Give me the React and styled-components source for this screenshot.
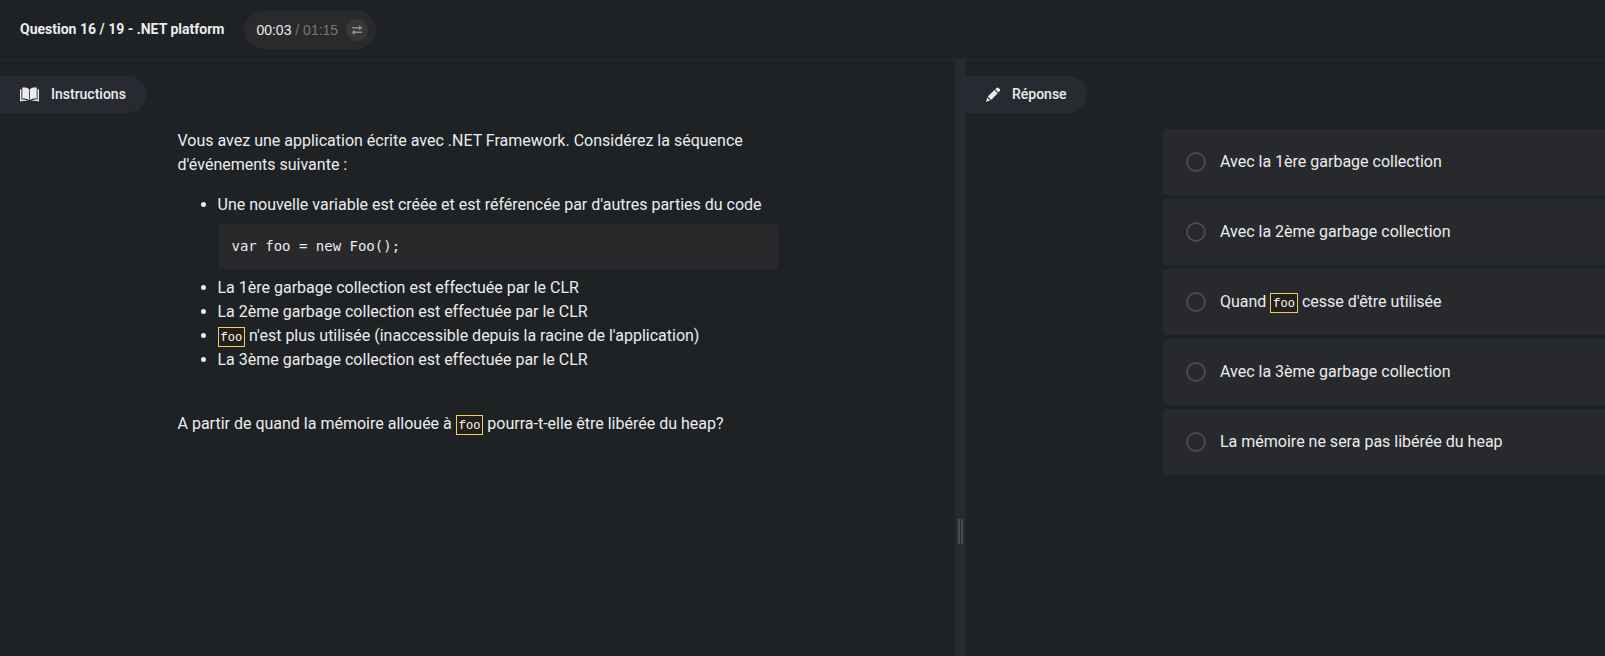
import React from "react";
import styled, { createGlobalStyle } from "styled-components";

const GlobalStyle = createGlobalStyle`
  * { box-sizing: border-box; }
  body {
    margin: 0;
    background: #1e2225;
    color: #ececee;
    font-family: Roboto, "Liberation Sans", sans-serif;
    font-size: 16px;
    line-height: 24px;
  }
`;

const Page = styled.div`
  min-height: 100vh;
  display: flex;
  flex-direction: column;
`;

const Header = styled.header`
  display: flex;
  align-items: center;
  gap: 20px;
  height: 60px;
  padding: 0 20px;
  border-bottom: 1px solid #272b2e;
`;

const Title = styled.h1`
  margin: 0;
  padding-bottom: 1px;
  font-size: 14px;
  font-weight: 700;
`;

const Timer = styled.div`
  display: flex;
  align-items: center;
  gap: 8px;
  height: 38px;
  padding: 0 8px 0 12px;
  border-radius: 20px;
  background: #2a2a2d;
  font-family: "Liberation Sans", sans-serif;
  font-size: 14px;
`;

const Total = styled.span`
  color: #77777a;
`;

const SwapButton = styled.button`
  display: grid;
  place-items: center;
  width: 22px;
  height: 22px;
  padding: 0;
  border: 0;
  border-radius: 50%;
  background: #37373a;
  color: #8b8b8e;
`;

const Panes = styled.main`
  flex: 1;
  display: grid;
  grid-template-columns: minmax(0, 955fr) 11px minmax(0, 639fr);
`;

const Pane = styled.section`
  padding-top: 16px;
  overflow: hidden;
`;

const Splitter = styled.div`
  display: flex;
  flex-direction: column;
  align-items: center;
  justify-content: flex-end;
  padding-bottom: 112px;
  background: #272a31;
`;

const Grip = styled.div`
  width: 5px;
  height: 25px;
  border: solid #484b51;
  border-width: 0 2px;
`;

const PaneTitle = styled.h2`
  display: flex;
  align-items: center;
  gap: 12px;
  width: fit-content;
  height: 37px;
  margin: 0 0 16px;
  padding: 0 20px 1px;
  border-radius: 0 20px 20px 0;
  background: #282a31;
  font-size: 14px;
  font-weight: 500;
`;

const Statement = styled.article`
  max-width: 600px;
  margin: 0 auto;
`;

const Paragraph = styled.p`
  margin: 0 0 16px;
`;

const Events = styled.ul`
  margin: 0 0 40px;
  padding-left: 40px;
`;

const CodeBlock = styled.pre`
  margin: 7px 0;
  padding: 12px 14px;
  border-radius: 4px;
  background: #29292c;
  font-family: "DejaVu Sans Mono", monospace;
  font-size: 14px;
  line-height: 21px;
`;

const Code = styled.code`
  padding: 3px 2px 1px;
  border: 1px solid #e8cf6a;
  background: #241f1a;
  color: #ffffff;
  font-family: "Liberation Mono", monospace;
  font-size: 12px;
  line-height: 12px;
`;

const Answers = styled.form`
  display: flex;
  flex-direction: column;
  gap: 4px;
  margin-left: 197px;
`;

const Answer = styled.label`
  display: flex;
  align-items: center;
  gap: 14px;
  height: 66px;
  padding: 0 23px;
  border-radius: 4px 0 0 4px;
  background: #28292c;
  white-space: nowrap;
`;

const Radio = styled.input`
  appearance: none;
  flex: none;
  width: 20px;
  height: 20px;
  margin: 0;
  border: 2px solid #4b4b4e;
  border-radius: 50%;
  &:checked { background: #e8cf6a; }
`;

const BookIcon = () => (
  <svg width="19" height="15" viewBox="0 0 19 15" fill="currentColor" aria-hidden="true">
    <path d="M2.300.6C5 .1 7.600.6 9.100 2.200v11C7.400 11.800 5 11.300 2.300 11.700z" />
    <path d="M16.700.6C14 .1 11.400.6 9.900 2.200v11c1.700-1.400 4.100-1.900 6.800-1.500z" />
    <path d="M0 2.200h1.400v10.500c2.300-.3 4.400 0 6.300 1.200-2.500-.3-5-.2-7.700.6z" />
    <path d="M19 2.200h-1.400v10.500c-2.300-.3-4.400 0-6.300 1.200 2.500-.3 5-.2 7.700.6z" />
  </svg>
);

const PencilIcon = () => (
  <svg width="14" height="15" viewBox="0 0 14 15" fill="currentColor" aria-hidden="true">
    <path d="m8.400 3 3.300 3.300-6.600 6.600-3.300-3.300z" />
    <path d="m1.200 10.500 3 3L0 14.800z" />
    <path d="m9.200 2.200 1.300-1.300c.7-.7 1.400-.7 2 0l1.200 1.200c.7.7.7 1.400 0 2l-1.200 1.300z" />
  </svg>
);

const SwapIcon = () => (
  <svg width="12" height="12" viewBox="0 0 12 12" fill="currentColor" aria-hidden="true">
    <path d="M1 3h7V1l3.500 2.700L8 6.400V4.500H1z" />
    <path d="M11 7.500H4V5.600L.5 8.300 4 11V9h7z" />
  </svg>
);

const answers = [
  "Avec la 1ère garbage collection",
  "Avec la 2ème garbage collection",
  <>Quand <Code>foo</Code> cesse d'être utilisée</>,
  "Avec la 3ème garbage collection",
  "La mémoire ne sera pas libérée du heap",
];

export default function App() {
  return (
    <Page>
      <GlobalStyle />
      <Header>
        <Title>Question 16 / 19 - .NET platform</Title>
        <Timer>
          <span>00:03 <Total>/ 01:15</Total></span>
          <SwapButton type="button" aria-label="Changer l'affichage du temps"><SwapIcon /></SwapButton>
        </Timer>
      </Header>
      <Panes>
        <Pane>
          <PaneTitle><BookIcon />Instructions</PaneTitle>
          <Statement>
            <Paragraph>
              Vous avez une application écrite avec .NET Framework. Considérez la séquence d'événements suivante :
            </Paragraph>
            <Events>
              <li>
                Une nouvelle variable est créée et est référencée par d'autres parties du code
                <CodeBlock>var foo = new Foo();</CodeBlock>
              </li>
              <li>La 1ère garbage collection est effectuée par le CLR</li>
              <li>La 2ème garbage collection est effectuée par le CLR</li>
              <li><Code>foo</Code> n'est plus utilisée (inaccessible depuis la racine de l'application)</li>
              <li>La 3ème garbage collection est effectuée par le CLR</li>
            </Events>
            <Paragraph>
              A partir de quand la mémoire allouée à <Code>foo</Code> pourra-t-elle être libérée du heap?
            </Paragraph>
          </Statement>
        </Pane>
        <Splitter role="separator" aria-orientation="vertical"><Grip /></Splitter>
        <Pane>
          <PaneTitle><PencilIcon />Réponse</PaneTitle>
          <Answers>
            {answers.map((text, i) => (
              <Answer key={i}>
                <Radio type="radio" name="answer" value={i} />
                <span>{text}</span>
              </Answer>
            ))}
          </Answers>
        </Pane>
      </Panes>
    </Page>
  );
}
